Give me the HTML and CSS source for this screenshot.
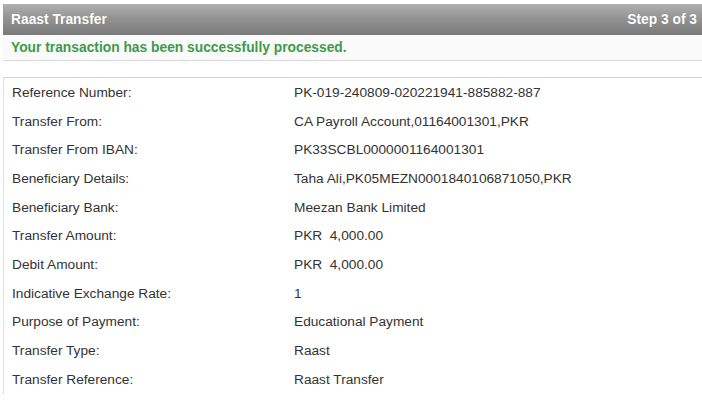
FILE: index.html
```html
<!DOCTYPE html>
<html>
<head>
<meta charset="utf-8">
<link rel="stylesheet" href="styles.css">
</head>
<body>
<div class="panel">
  <div class="header">
    <span class="title">Raast Transfer</span>
    <span class="step">Step 3 of 3</span>
  </div>
  <div class="success">Your transaction has been successfully processed.</div>
  <div class="details">
    <div class="row"><span class="label">Reference Number:</span><span class="value">PK-019-240809-020221941-885882-887</span></div>
    <div class="row"><span class="label">Transfer From:</span><span class="value">CA Payroll Account,01164001301,PKR</span></div>
    <div class="row"><span class="label">Transfer From IBAN:</span><span class="value">PK33SCBL0000001164001301</span></div>
    <div class="row"><span class="label">Beneficiary Details:</span><span class="value">Taha Ali,PK05MEZN0001840106871050,PKR</span></div>
    <div class="row"><span class="label">Beneficiary Bank:</span><span class="value">Meezan Bank Limited</span></div>
    <div class="row"><span class="label">Transfer Amount:</span><span class="value">PKR&nbsp; 4,000.00</span></div>
    <div class="row"><span class="label">Debit Amount:</span><span class="value">PKR&nbsp; 4,000.00</span></div>
    <div class="row"><span class="label">Indicative Exchange Rate:</span><span class="value">1</span></div>
    <div class="row"><span class="label">Purpose of Payment:</span><span class="value">Educational Payment</span></div>
    <div class="row"><span class="label">Transfer Type:</span><span class="value">Raast</span></div>
    <div class="row"><span class="label">Transfer Reference:</span><span class="value">Raast Transfer</span></div>
  </div>
</div>
</body>
</html>
```

FILE: styles.css
```css
html, body {
  margin: 0;
  padding: 0;
  background: #ffffff;
}
body {
  font-family: "Liberation Sans", Arial, sans-serif;
  padding: 4px 0 0 3px;
}
.panel {
  width: 699px;
}
.header {
  height: 31px;
  box-sizing: border-box;
  display: flex;
  align-items: center;
  justify-content: space-between;
  padding: 0 5px 0 8px;
  background: linear-gradient(to bottom, #b0b0b0 0%, #949494 45%, #7a7a7a 100%);
  color: #ffffff;
  font-weight: bold;
  font-size: 13.8px;
  text-shadow: 0 0 1px rgba(0,0,0,0.15);
}
.success {
  height: 26px;
  box-sizing: border-box;
  display: flex;
  align-items: center;
  padding: 0 0 0 8px;
  background: #fafafa;
  border-bottom: 1px solid #d9d9d9;
  color: #3d9a4a;
  font-weight: bold;
  font-size: 13.8px;
}
.details {
  margin-top: 16px;
  border-top: 1px solid #d4d4d4;
  border-left: 1px solid #e0e0e0;
  display: flex;
  flex-direction: column;
}
.row {
  height: 28.7px;
  display: flex;
  align-items: center;
  color: #333333;
  font-size: 13.7px;
}
.label {
  width: 282px;
  padding-left: 8px;
  flex: none;
}
.value {
  flex: 1;
}
```
